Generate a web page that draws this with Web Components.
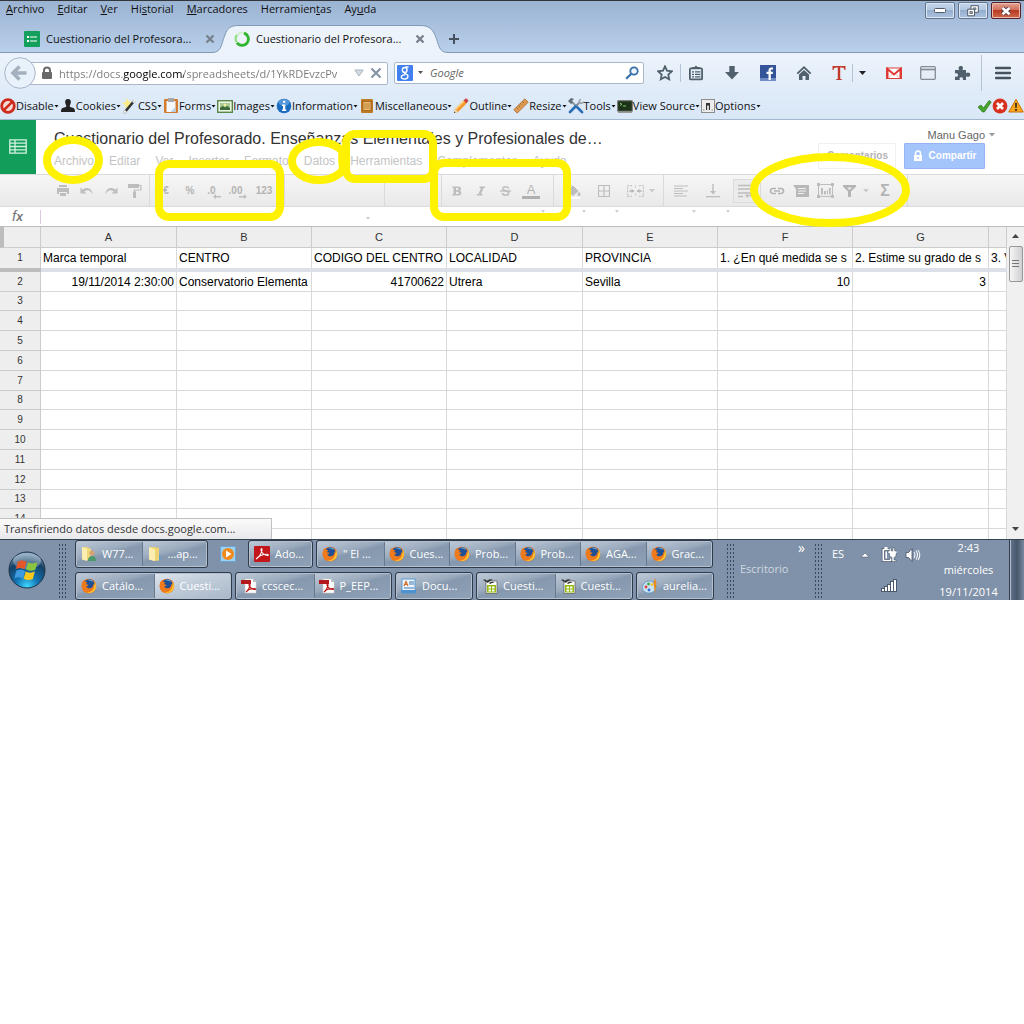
<!DOCTYPE html>
<html lang="es">
<head>
<meta charset="utf-8">
<title>Cuestionario del Profesorado</title>
<style>
  body { margin: 0; background: #fff; font: 12px/16px "Open Sans", "Noto Sans", sans-serif; color: #111; }
</style>
</head>
<body>
<browser-window>
  <menu-bar slot="chrome"></menu-bar>
  <tab-strip slot="chrome"></tab-strip>
  <nav-bar slot="chrome"></nav-bar>
  <dev-toolbar slot="chrome"></dev-toolbar>
  <sheets-app></sheets-app>
</browser-window>
<task-bar></task-bar>

<script>
const RESET = `
  :host, *, *::before { box-sizing: border-box; }
  button { font: inherit; color: inherit; background: none; border: 0; padding: 0; margin: 0; display: inline-flex; align-items: center; white-space: nowrap; }
  input { font: inherit; color: inherit; background: none; border: 0; padding: 0; margin: 0; min-width: 0; outline: 0; }
  ui-icon { flex: none; }
`;
function define(name, css, html) {
  customElements.define(name, class extends HTMLElement {
    constructor() {
      super();
      const t = document.createElement('template');
      const body = typeof html === 'function' ? html(this) : html;
      t.innerHTML = `<style>${RESET}${css}</style>${body}`;
      this.attachShadow({ mode: 'open' }).append(t.content.cloneNode(true));
    }
  });
}

/* ---------- icons: [width, height, markup] ---------- */
const FOX = `<circle cx="8" cy="8" r="7.3" fill="#e8701a"/><circle cx="8.2" cy="6.6" r="5.3" fill="#1f4f94"/><path d="M6 2.2c2-1.4 5-.8 6.300 1.300-1-.3-1.500.2-2.600-.4-1.200-.5-2-.8-3.700-.9z" fill="#57a6dc"/><path d="M.9 5.500C1.200 4 2 2.800 3 2c-.1 1 .2 1.500.6 1.900 1-.2 2 .1 2.700.6-.7.500-1.200.9-1 1.800.8.400 1.700.2 2.300.7-.5 1-1.500 1-2.300 1.400.5 1.600 2.700 2.300 4.700 1.500 1.700-.8 2.500-2.300 2.200-4.200 1.200 1 1.500 2 1.400 3.600.8-1 1.100-2.300 1-3.500.9 2.800.3 5.700-1.900 7.600-3 2.600-7.600 2.500-10.200-.4C.7 11 .3 8.100.9 5.500z" fill="#ee7a1c"/><path d="M13.700 3.800c2 3.400 1.600 7.100-.7 9.300-2 2-5.500 2.500-8 1.200 3.200.5 6.200-.8 7.500-3.500.9-2 1.200-4.700 1.200-7z" fill="#fcc834"/>`;
const PDF = `<path d="M4 1h8l3 3v11H4z" fill="#fff" stroke="#ccc" stroke-width=".6"/><path d="M12 1v3h3z" fill="#bbb"/><path d="M0 2h10v4H0z" fill="#b3181c"/><path d="M5 14c2-1 4-5 4-7 0-1-1-1-1 0 0 2 3 4.500 6 4.500 1 0 .8-1-.5-1C11 10.500 7 12 5 14z" fill="none" stroke="#c01818" stroke-width="1.200"/>`;
const CALC = `<path d="M4 3h11v12.500H4z" fill="#fff" stroke="#555" stroke-width=".7"/><path d="M5 7h9v7.500H5z" fill="#94ba10"/><path d="M6.500 8.500h2.500v2H6.500zM10 8.500h2.500v2H10zM6.500 11.500h2.500v2H6.500zM10 11.500h2.500v2H10z" fill="#fff"/><path d="M1 2c2-1 3 0 4 1 2-2 4-2 6-1-2 0-4 1-5 3C4 4 3 3 1 2zM7 5c2-1.500 4-1.500 6-.5-2 0-3 .5-5 1.500z" fill="#333"/>`;
const G = '#bdbdbd';
const S = '#50606c';
const ICONS = {
  form: [16,16,`<rect width="16" height="16" rx="1" fill="#13a05c"/><path d="M3 5h2v2H3zM3 9h2v2H3z" fill="#fff"/><path d="M6 5.500h7v1H6zM6 9.500h7v1H6z" fill="#fff"/>`],
  spin: [16,16,`<circle cx="8" cy="8" r="6.300" fill="none" stroke="#d5f0cf" stroke-width="2.500"/><path d="M10 2.100A6.300 6.300 0 1 1 3 11.800" fill="none" stroke="#2fb52f" stroke-width="2.800"/><path d="M2.500 11A6.300 6.300 0 0 1 3 4" fill="none" stroke="#8ddc84" stroke-width="2"/>`],
  close: [10,10,`<path d="M1.500 1.500l7 7m0-7l-7 7" stroke="#78828e" stroke-width="2.400"/>`],
  plus: [12,12,`<path d="M6 1v10M1 6h10" stroke="#46515e" stroke-width="2"/>`],
  back: [32,32,`<circle cx="16" cy="16" r="15.300" fill="#e9f1fa" stroke="#a5b6c9"/><path d="M9 16h13.500M15.500 9.500L9 16l6.500 6.500" fill="none" stroke="#a4b0be" stroke-width="3.600"/>`],
  lock: [12,14,`<path d="M3 7V4.500a3 3 0 0 1 6 0V7" fill="none" stroke="#6a6a6a" stroke-width="2"/><rect x="1" y="6" width="10" height="7" rx="1" fill="#6a6a6a"/>`],
  dropm: [10,8,`<path d="M.8 1h8.400L5 7z" fill="#d5dbe2" stroke="#a9b4c0"/>`],
  stop: [12,12,`<path d="M1.500 1.500l9 9m0-9l-9 9" stroke="#8594a4" stroke-width="2.200"/>`],
  google: [16,16,`<rect width="16" height="16" rx="1" fill="#4280ef"/><g fill="none" stroke="#fff" stroke-width="1.400"><ellipse cx="7.700" cy="5" rx="2.300" ry="2.500"/><path d="M8.500 2h3M8 7.500c-1.500 1 1.500 1.500 2.500 2.500 1.500 2-.5 4-2.800 4-2.500 0-4-1.300-3.200-2.900.6-1 2-1.300 3.500-1.300"/></g>`],
  caret: [7,4,`<path d="M1 0h5L3.500 3z" fill="#555"/>`],
  tinycaret: [5,3,`<path d="M.5 0h4L2.500 2.500z" fill="#111"/>`],
  lens: [14,14,`<circle cx="9" cy="5" r="3.700" fill="#eef6fd" stroke="#356fa8" stroke-width="1.800"/><path d="M6.300 7.700L1.200 12.800" stroke="#356fa8" stroke-width="2.200"/>`],
  star: [16,16,`<path d="M8 1.300l2 4.400 4.800.6-3.500 3.300.9 4.700L8 12l-4.200 2.300.9-4.700L1.200 6.300l4.800-.6z" fill="none" stroke="${S}" stroke-width="1.800"/>`],
  clip: [16,16,`<rect x="1.900" y="3.400" width="12.200" height="11" rx="1" fill="none" stroke="${S}" stroke-width="1.800"/><path d="M4 4V2h2.500L8 .5 9.500 2H12v2zM4 6.200h2v1.300H4zM7 6.200h5.500v1.300H7zM4 8.700h2V10H4zM7 8.700h5.500V10H7zM4 11.200h2v1.300H4zM7 11.200h5.500v1.300H7z" fill="${S}"/>`],
  down: [16,16,`<path d="M5.300 1h5.400v6H15l-7 7.500L1 7h4.300z" fill="${S}"/>`],
  fb: [16,16,`<rect width="16" height="16" fill="#34549a"/><path d="M0 13h16v3H0z" fill="#6f8cc4"/><path d="M8.500 15V9H6.500V6.800h2V5.200C8.500 3.300 9.700 2.500 11.200 2.500H13V4.600h-1.200c-.8 0-1 .4-1 1v1.200H13L12.700 9h-1.900v6z" fill="#fff"/>`],
  home: [16,16,`<path d="M8 1L.7 8l1.200 1.200L8 3.500l6.100 5.700L15.300 8z" fill="${S}"/><path d="M3 9.600L8 5l5 4.600V15H9.500v-4h-3v4H3z" fill="${S}"/>`],
  bigT: [14,16,`<path d="M.5 1h13v4h-1c-.3-2-1-2.600-3-2.600H8.200V13c0 1 .3 1.300 2 1.400v.6H3.800v-.6c1.700-.1 2-.4 2-1.400V2.400H4.500c-2 0-2.700.6-3 2.600h-1z" fill="#c1392b"/>`],
  darkcaret: [7,4,`<path d="M0 0h7L3.500 4z" fill="#222"/>`],
  gmail: [16,16,`<rect x=".5" y="3" width="15" height="10.500" fill="#fff" stroke="#d9403a"/><path d="M1.500 13.500V4L8 9.500 14.500 4v9.500" fill="none" stroke="#dd3a35" stroke-width="2"/><path d="M2.500 13l4-4m3 0l4 4" stroke="#e9a5a1" stroke-width=".8"/>`],
  win: [16,16,`<rect x=".7" y="1.700" width="14.600" height="12.600" rx="1" fill="#e4ecf5" stroke="#868b91" stroke-width="1.300"/><path d="M1 4.500h14" stroke="#868b91" stroke-width="1.600"/>`],
  puzzle: [17,16,`<path d="M1 5h4.200c-1.300-1.800-.4-4 1.600-4s2.900 2.200 1.600 4H12v3.200c1.900-1.300 4.300-.4 4.300 1.500S13.900 12.500 12 11.200V15H8.700c.8-1.800 0-2.800-1.400-2.800S5 13.200 5.800 15H1v-3.500c2 .8 3-.2 3-1.500s-1-2.200-3-1.500z" fill="${S}"/>`],
  burger: [16,14,`<path d="M1 2h14M1 7h14M1 12h14" stroke="#46525e" stroke-width="2.400" stroke-linecap="round"/>`],
  disable: [16,16,`<circle cx="8" cy="8" r="6.300" fill="#f4dcd6" stroke="#cf2a1c" stroke-width="2.800"/><path d="M3.800 12.200l8.400-8.400" stroke="#cf2a1c" stroke-width="2.600"/>`],
  cookies: [16,16,`<path d="M8 1c2.300 0 3 1.500 2.800 3.500C10.500 6.500 9.800 7 9.700 8c.1 1 .6 1 2.300 1.500 2.200.6 3 1.500 3 4.500H1c0-3 .8-3.900 3-4.500C5.700 9 6.200 9 6.300 8c-.1-1-.8-1.500-1.100-3.500C5 2.500 5.700 1 8 1z" fill="#222"/>`],
  css: [16,16,`<path d="M5 0l1.300 3.500L9 2.500 8 5.500l3 1.500-3.200 1L8 11 5.500 9 2 10l1.500-3L0 5l3.500-.7z" fill="#f9ec82"/><path d="M2 15L12.500 2.500" stroke="#333" stroke-width="2.600"/><path d="M11 4.500L13.500 1.500M2 15l1.800-2.200" stroke="#eee" stroke-width="2.400"/>`],
  forms: [16,16,`<rect x="1" y="1" width="14" height="14" rx="1" fill="#d27c30"/><path d="M3.500 3h9v11h-9z" fill="#f5f8fb"/><path d="M5 0h6v4H5z" fill="#a7a7a7"/><path d="M12.500 9v5h-5z" fill="#b8d0e8"/>`],
  images: [16,16,`<rect x=".7" y="2.700" width="14.600" height="11.600" fill="#eef5e6" stroke="#57884a" stroke-width="1.400"/><rect x="3" y="5" width="10" height="7" fill="#a9c992"/><path d="M3 12V9.500l3-1.500 2 1.500L10 8l3 2v2z" fill="#3d6a3a"/><circle cx="8" cy="7" r="1.300" fill="#f8f0a0"/>`],
  info: [16,16,`<circle cx="8" cy="8" r="7.300" fill="#1c6cc0"/><ellipse cx="8" cy="4.600" rx="5.300" ry="3.400" fill="#6caae3" opacity=".7"/><path d="M7 2.800h2.300v2H7zM6 6.500h3.300v5h1V13H6v-1.500h1V8H6z" fill="#fff"/>`],
  misc: [16,16,`<rect x="2" y="1" width="12" height="14" rx="1" fill="#c07a25"/><rect x="4" y="3.500" width="8" height="9" fill="#eebc6c" stroke="#8f5716" stroke-width=".7"/><path d="M5 6h6M5 8h6M5 10h6" stroke="#a87535" stroke-width=".8"/>`],
  outline: [16,16,`<path d="M1 15l1-4L11 2l3 3-9 9z" fill="#f59a2a"/><path d="M2 11L11 2l1 1-9 9z" fill="#fbd58a"/><path d="M10.500 2.500L12.500.5c1-.6 3.200 1.500 2.800 2.700l-2 2z" fill="#cc4540"/><path d="M1 15l1-4 3 3z" fill="#e8d5b5"/><path d="M1 15l.4-1.500 1.100 1.100z" fill="#222"/>`],
  resize: [16,16,`<path d="M.8 11.800L11.800.8l3.400 3.400-11 11z" fill="#db9a52" stroke="#a9692d" stroke-width=".8"/><path d="M3.500 9.500l1.200 1.200M5.500 7.500L7 9M7.500 5.500l1.200 1.200M9.500 3.500L11 5" stroke="#8a5422" stroke-width=".7"/>`],
  tools: [16,16,`<path d="M3 3l10.500 10.500" stroke="#8b96a0" stroke-width="2"/><path d="M0 3l3-3 3 1-1 1-1.500 1L5 4.500 3 6z" fill="#666e76"/><path d="M11 5L8 8" stroke="#808a93" stroke-width="2"/><path d="M11 5.500C9.500 3 11 .8 13.300.8l-1.300 2.400 1.700 1.300 2-1.600C16 5.500 14 7 11 5.500z" fill="#9aa4ac"/><path d="M7.500 8.500L2 14M9.500 9.500l4.500 4.700" stroke="#2a6fb5" stroke-width="2.600" stroke-linecap="round"/>`],
  term: [16,16,`<rect x=".6" y="2.600" width="14.800" height="10.800" rx="1" fill="#1d3219" stroke="#7d807d" stroke-width="1.200"/><path d="M3 5l2 1.300L3 7.600M6 8h3" fill="none" stroke="#7fd069"/><path d="M1 13.500h14v1.500H1z" fill="#999"/>`],
  options: [14,16,`<rect x=".5" y="1.500" width="13" height="13" fill="#ececec" stroke="#8d8d8d"/><path d="M5 5h4v7H5z" fill="#333"/><path d="M6.200 7.500h1.600V12H6.200z" fill="#fff"/><circle cx="2.800" cy="12" r=".7" fill="#888"/><circle cx="11.200" cy="12" r=".7" fill="#888"/>`],
  check: [15,16,`<path d="M1 9l3-2 2.500 3L12 2.500 14.300 4 7.300 14H5.500z" fill="#48a52b" stroke="#2a7417" stroke-width=".7"/>`],
  error: [16,16,`<circle cx="8" cy="8" r="7.400" fill="#d8301f"/><path d="M5 5l6 6m0-6l-6 6" stroke="#fff" stroke-width="2.700"/>`],
  warn: [16,16,`<path d="M8 1.300L15.300 14H.7z" fill="#f9a51b" stroke="#c9730b" stroke-linejoin="round"/><path d="M7.100 5h1.800l-.3 5H7.400zM7.100 11h1.800v1.700H7.100z" fill="#222"/>`],
  min: [12,6,`<rect x=".5" y=".5" width="11" height="4" rx="1" fill="#fff" stroke="#535b68"/>`],
  restore: [12,12,`<path d="M4 .7h7.300v6.600H4z" fill="#fff" stroke="#535b68"/><path d="M6.300 2.800h2.700v2H6.300z" fill="#8aa" stroke="#535b68" stroke-width=".6"/><path d="M.7 4.200h6.800v6.600H.7z" fill="#fff" stroke="#535b68"/><path d="M2.900 6.500h2.500v2H2.900z" fill="#9bb" stroke="#535b68" stroke-width=".8"/>`],
  xwin: [12,10,`<path d="M2.500 2l7 6.200m0-6.200l-7 6.200" stroke="#5a4048" stroke-width="4.400"/><path d="M2.500 2l7 6.200m0-6.200l-7 6.200" stroke="#fff" stroke-width="2.600"/>`],
  sheet: [18,16,`<path d="M.8.800h16.400v13.400H.8zM.8 4.200h16.400M.8 7.500h16.400M.8 10.900h16.400M6 .8v13.400" fill="none" stroke="#d5f1e2" stroke-width="1.300"/>`],
  print: [14,12,`<path d="M3 0h8v2H3zM1 3h12v6h-2V7H3v2H1zM4 8h6v3H4z" fill="${G}"/>`],
  undo: [14,10,`<path d="M.5 1.500v6h6L4.300 5.500C7 3.500 10 4 12.500 8c.6-.3-1-5.500-5-6C5.500 1.700 4 2.500 2.800 3.800z" fill="${G}"/>`],
  redo: [14,10,`<path d="M13.500 1.500v6h-6l2.200-2C7 3.500 4 4 1.500 8c-.6-.3 1-5.500 5-6 2-.3 3.500.5 4.700 1.800z" fill="${G}"/>`],
  paint: [14,16,`<path d="M0 1h11v4H0z" fill="${G}"/><path d="M11 2.500h2v4.500H6.500V9" fill="none" stroke="${G}" stroke-width="1.200"/><path d="M5 8.500h3V15H5z" fill="${G}"/>`],
  arrl: [8,5,`<path d="M8 2H3V0L0 2.700 3 5V3.400h5z" fill="${G}"/>`],
  arrr: [8,5,`<path d="M0 2h5V0l3 2.700L5 5V3.400H0z" fill="${G}"/>`],
  fill: [16,16,`<path d="M3 8l5-5 5 5-5 4.500zM5 1l3 3" fill="${G}" stroke="${G}"/><path d="M14 8.500c1 1.500 1.500 2 1.500 3a1.500 1.500 0 0 1-3 0c0-1 .5-1.500 1.500-3z" fill="${G}"/><path d="M1 14h14v2H1z" fill="#fafafa"/>`],
  borders: [12,12,`<path d="M.5.500h11v11H.5zM6 .5v11M.5 6h11" fill="none" stroke="${G}" stroke-width="1.200"/>`],
  merge: [17,12,`<path d="M5 .6H.6v10.800H5M12 .6h4.400v10.800H12M8.500.6v3m0 5v3" fill="none" stroke="#c6c6c6" stroke-width="1.200" stroke-dasharray="2 1"/><path d="M2.500 6h2M12.500 6h2" stroke="#b0b0b0" stroke-width="1.400"/><path d="M4.500 4L7.500 6 4.500 8zM12.500 4l-3 2 3 2z" fill="#b0b0b0"/>`],
  gcaret: [6,4,`<path d="M0 0h6L3 3.500z" fill="#cacaca"/>`],
  bold: [10,10,`<path d="M.5.500h5.300c2 0 3.200.8 3.200 2.200 0 1-.6 1.700-1.500 2C8.700 5 9.400 5.900 9.400 7 9.400 8.600 8 9.500 6 9.500H.5V8h1V2h-1zM4 2v2h1.500c.6 0 1-.4 1-1s-.4-1-1-1zM4 5.700V8h1.700c.7 0 1.100-.5 1.100-1.200 0-.7-.5-1.100-1.200-1.100z" fill="${G}"/>`],
  italic: [10,10,`<path d="M3.500.500H9V2H7.500L5 8h1.500v1.500H.8V8h1.700L5 2H3.500z" fill="${G}"/>`],
  strike: [11,10,`<path d="M8.500 2.700C8.300 1.500 7.200.800 5.500.800 3.800.8 2.700 1.600 2.700 2.800c0 2.500 6 1.500 6 4.200 0 1.300-1.200 2.200-3.100 2.200-1.900 0-3.200-.9-3.300-2.300" fill="none" stroke="${G}" stroke-width="1.600"/><path d="M0 5h11" stroke="${G}" stroke-width="1.300"/>`],
  align: [14,12,`<path d="M0 1h14M0 3.500h9M0 6h14M0 8.500h9M0 11h13" stroke="${G}" stroke-width="1.100"/>`],
  valign: [14,14,`<path d="M6.300 0h1.400v7H10l-3 3.500L4 7h2.300zM0 12h14v1.300H0z" fill="${G}"/>`],
  wrap: [14,14,`<path d="M0 1.500h14M0 5h14M0 9h12.500v3M0 12.500h5" fill="none" stroke="${G}" stroke-width="1.300"/><path d="M10 9.500v4.500l-3-2.300z" fill="${G}"/><path d="M9 11.800h4" stroke="${G}" stroke-width="1.200"/>`],
  link: [16,8,`<path d="M7 6.500H4a2.500 2.500 0 0 1 0-5h3M9 1.500h3a2.500 2.500 0 0 1 0 5H9M5 4h6" fill="none" stroke="#b4b4b4" stroke-width="1.700"/>`],
  comment: [16,14,`<path d="M0 1h16v12H3V5z" fill="#b8b8b8"/><path d="M5 4.500h8M5 7h8M5 9.500h6" stroke="#f1f1f1"/>`],
  chart: [17,15,`<path d="M1.500 1.500h14v12h-14z" fill="none" stroke="${G}"/><path d="M0 0h3v3H0zM14 0h3v3h-3zM0 12h3v3H0zM14 12h3v3h-3zM4 5h2v6.500H4zM7 8h2v3.500H7zM10 7h1v4.500h-1zM12 5h1.800v6.500H12z" fill="${G}"/>`],
  filter: [13,12,`<path d="M0 0h13v1.500L8 6.500V12H5V6.500L0 1.500z" fill="#b4b4b4"/><path d="M4 2.500h5L6.500 5z" fill="#eee"/>`],
  whitelock: [10,12,`<path d="M2.500 5V3.500a2.500 2.500 0 0 1 5 0V5" fill="none" stroke="#fff" stroke-width="1.500"/><path d="M1 5h8v6H1z" fill="#fff"/><path d="M4.300 7h1.400v2H4.300z" fill="#a4c4fb"/>`],
  ucaret: [6,4,`<path d="M0 0h6L3 3.500z" fill="#999"/>`],
  scup: [7,5,`<path d="M0 4h7L3.500 0z" fill="#444"/>`],
  scdown: [7,5,`<path d="M0 0h7L3.500 4z" fill="#444"/>`],
  orb: [38,38,`<defs><radialGradient id="o" cx=".5" cy=".95" r=".9"><stop offset="0" stop-color="#3fd8ff"/><stop offset=".35" stop-color="#1273b4"/><stop offset=".75" stop-color="#144064"/><stop offset="1" stop-color="#6f95b3"/></radialGradient></defs><circle cx="19" cy="19" r="18" fill="url(#o)" stroke="#1f3346" stroke-width="1"/><ellipse cx="19" cy="10" rx="14" ry="8" fill="#fff" opacity=".3"/><path d="M10 10.500c3-1.500 5.500-1.500 8.500.2l-2 7.600c-3-1.700-5.500-1.500-8.700-.2z" fill="#e2582a"/><path d="M20 11.300c3.500 1.700 6 1.400 9.500 0l-2.200 7.500c-3 1.400-5.700 1.500-9.200-.2z" fill="#8bc53f"/><path d="M7.300 19.800c3-1.500 5.800-1.400 8.700.2l-2 7.400c-3-1.600-5.500-1.500-8.600-.2z" transform="translate(1 0)" fill="#3f9be0"/><path d="M17.700 20.400c3.300 1.700 6 1.500 9.200.2l-2.100 7.400c-3 1.400-5.900 1.400-9.200-.3z" fill="#fbc81c"/>`],
  fox: [16,16,FOX], pdf: [16,16,PDF], calc: [16,16,CALC],
  folderu: [16,16,`<path d="M1 1h5l4 2v12l-5-1-4-1z" fill="#f0d878"/><path d="M6 3v12l-5-1.500V1z" fill="#fbeeb0"/><circle cx="11" cy="7" r="2.600" fill="#d6a273"/><path d="M7 15c0-4 2-5 4-5s4 1 4 5z" fill="#4c9a6b"/>`],
  folder: [16,16,`<path d="M3 1h4l5 1v12.500l-5 .5-5-1.500z" fill="#edd371"/><path d="M8 3.500v11.500l-6-1.500V1z" fill="#fbeeb0"/><path d="M12 9h1.500v5H12z" fill="#5aa3da"/>`],
  player: [16,16,`<rect x=".5" y=".5" width="15" height="15" fill="#9fd0ef" stroke="#6aa6d4"/><circle cx="8" cy="8" r="6" fill="#f08a1c"/><path d="M6 4.500L11.500 8 6 11.500z" fill="#fff"/>`],
  adobe: [16,16,`<rect width="16" height="16" rx="1" fill="#c2161b"/><path d="M2 13c3-1.500 6-6 6-9.500 0-1.300-1.300-1-1 .5.500 3 3.500 5.500 6.500 5.500 1.300 0 1-1.200-.5-1.200C9.500 8.300 5 9.500 2 13z" fill="none" stroke="#fff" stroke-width="1.100"/>`],
  wordpad: [16,16,`<rect x="1" y="1" width="13" height="14" fill="#eef6fd" stroke="#5c9ad0"/><path d="M0 12h15v3H0z" fill="#4b92d0"/><path d="M3 8l2-4.500L7 8M4 6.500h2" fill="none" stroke="#d8691c" stroke-width="1.200"/><path d="M8 4h5M8 6h5M3 10h10" stroke="#3a77b0"/>`],
  paintapp: [16,16,`<path d="M7.500 3C11 3 14 5.500 14 9s-3 6-7 6-6.500-2.500-6.500-5.500S3 3 7.500 3z" fill="#c7e2f4" stroke="#5d93bb" stroke-width=".8"/><circle cx="4" cy="9" r="1.400" fill="#df3f34"/><circle cx="6.500" cy="6" r="1.400" fill="#4aa53c"/><circle cx="10" cy="6.500" r="1.300" fill="#f3c51f"/><circle cx="7" cy="12" r="1.400" fill="#3a6fd0"/><path d="M13 0l1.500 5-1.500 11-1.500-11z" fill="#e88a1c"/>`],
  trayup: [10,6,`<path d="M1 5h8L5 1z" fill="#fff" stroke="#55657a" stroke-width=".6"/>`],
  power: [16,16,`<path d="M8 2.500H2.300v11h7.400v-2" fill="none" stroke="#3f4d5f" stroke-width="3"/><path d="M8 2.500H2.300v11h7.400v-2" fill="none" stroke="#fff" stroke-width="1.700"/><path d="M3.500 0h3v2h-3zM4.500 4.500H6v7H4.500z" fill="#fff"/><path d="M8.300 1h1.900v3h1.600V1h1.900v3H16v2.500h-1V9l-2 1.500V13h2v1.500h-4v-4L8.500 9V6.500H7V4h1.300z" fill="#fff" stroke="#3f4d5f" stroke-width=".5"/>`],
  sound: [16,16,`<path d="M1 5.500h2.500L7 1.500v13L3.500 10.500H1z" fill="#fff" stroke="#3f4d5f" stroke-width=".8"/><path d="M9 5c1.300 2 1.300 4 0 6M11 3.500c2 3 2 6 0 9M13 3c2.500 3.500 2.500 6.500 0 10" fill="none" stroke="#f2f5f9" stroke-width="1.100"/>`],
  signal: [16,13,`<path d="M0 9h3v4H0zM3 7h3v6H3zM6 5h3v8H6zM9 2h4v11H9zM12 0h4v13h-4z" fill="#4a586b"/><path d="M1 10h2v2H1zM4 8h2v4H4zM7 6h2v6H7zM10 3h2v9h-2zM13 1h2v11h-2z" fill="#fff"/>`],
};
customElements.define('ui-icon', class extends HTMLElement {
  constructor() {
    super();
    const [w, h, body] = ICONS[this.getAttribute('name')];
    this.attachShadow({ mode: 'open' }).innerHTML =
      `<style>:host{display:inline-flex;width:${w}px;height:${h}px}svg{display:block}</style><svg width="${w}" height="${h}" viewBox="0 0 ${w} ${h}" aria-hidden="true">${body}</svg>`;
  }
});

/* ---------- browser chrome ---------- */
define('menu-bar', `
  :host { display: flex; justify-content: space-between; align-items: flex-start; height: 24px; border-top: 1px solid #33363c; font-size: 11px; }
  nav { display: flex; gap: 13px; padding-left: 6px; }
  nav button { height: 16px; }
  .win { display: flex; gap: 3px; padding: 1px 3px 0 0; }
  .win button { width: 30px; height: 17px; justify-content: center; border: 1px solid #63758d; border-radius: 2px; background: linear-gradient(#c3d5ea, #b2c8e1 45%, #94aecd 50%, #adc4e0); box-shadow: inset 0 0 0 1px #dbe7f5; }
  .win .x { border-color: #55202c; background: linear-gradient(#e3a294, #d2705c 45%, #b83a22 50%, #cf6a4c); box-shadow: inset 0 0 0 1px #eebbaf; }
`, `<nav>
  <button><span><u>A</u>rchivo</span></button><button><span><u>E</u>ditar</span></button><button><span><u>V</u>er</span></button>
  <button><span>Hi<u>s</u>torial</span></button><button><span><u>M</u>arcadores</span></button><button><span>Herramien<u>t</u>as</span></button><button><span>Ay<u>u</u>da</span></button>
</nav>
<div class="win"><button aria-label="Minimizar"><ui-icon name="min"></ui-icon></button><button aria-label="Restaurar"><ui-icon name="restore"></ui-icon></button><button class="x" aria-label="Cerrar"><ui-icon name="xwin"></ui-icon></button></div>`);

define('browser-tab', `
  :host { display: grid; width: 212px; height: 29px; font-size: 11px; }
  :host([active]) { width: 236px; }
  svg, .row { grid-area: 1 / 1; }
  svg { display: none; width: 100%; height: 29px; }
  :host([active]) svg { display: block; }
  .row { display: flex; align-items: center; gap: 6px; padding: 1px 0 0 24px; }
  :host([active]) .row { padding-left: 22px; }
  .title { width: 153px; white-space: nowrap; overflow: hidden; }
`, `<svg viewBox="0 0 236 29" preserveAspectRatio="none"><path d="M0 28.500C10 28.500 9 20 13 11 15 5 18 1.500 26 1.500H208C217 1.500 220 5 223 11 227 20 226 28.500 236 28.500V29H0z" fill="#edf3fb"/><path d="M0 28.500C10 28.500 9 20 13 11 15 5 18 1.500 26 1.500H208C217 1.500 220 5 223 11 227 20 226 28.500 236 28.500" fill="none" stroke="#8299b8"/></svg>
<div class="row"><slot name="icon"></slot><span class="title"><slot></slot></span><button aria-label="Cerrar pestaña"><ui-icon name="close"></ui-icon></button></div>`);

define('tab-strip', `
  :host { display: flex; align-items: center; height: 29px; box-shadow: inset 0 -1px #8299b8; }
`, `<browser-tab><ui-icon slot="icon" name="form"></ui-icon>Cuestionario del Profesora...</browser-tab><browser-tab active><ui-icon slot="icon" name="spin"></ui-icon>Cuestionario del Profesora...</browser-tab><button aria-label="Nueva pestaña"><ui-icon name="plus"></ui-icon></button>`);

define('nav-bar', `
  :host { display: flex; align-items: center; height: 40px; padding: 0 13px 0 4px; background: linear-gradient(#edf3fb, #dfebf8); font-size: 12px; }
  .back { z-index: 1; }
  .url, .search { display: flex; align-items: center; height: 23px; background: #fff; border: 1px solid #a9b9cb; border-radius: 2px; }
  .url { flex: 1; margin-left: -10px; padding: 0 5px 0 14px; gap: 6px; }
  .url input { flex: 1; height: 20px; font-size: 11px; -webkit-text-fill-color: transparent; background: linear-gradient(90deg, #777 64px, #000 64px, #000 125px, #777 125px) text; }
  .search { width: 250px; height: 22px; margin-left: 6px; padding: 0 4px 0 2px; gap: 4px; }
  .search input { flex: 1; font-style: italic; font-size: 11px; color: #666; padding-left: 2px; }
  .search input::placeholder { color: #666; opacity: 1; }
  .tools { display: flex; align-items: center; gap: 20px; padding-left: 13px; }
  .tools div { display: flex; align-items: center; gap: 7px; }
  .tools .txt { gap: 6px; }
  .tools .ext { gap: 18px; }
  .tools .end { gap: 13px; margin-left: -10px; }
  i { width: 1px; height: 18px; background: #b5c4d5; }
  .tall { height: 36px; }
`, `<button class="back" aria-label="Atrás"><ui-icon name="back"></ui-icon></button>
<div class="url"><ui-icon name="lock"></ui-icon><input aria-label="Dirección" value="https://docs.google.com/spreadsheets/d/1YkRDEvzcPv"><ui-icon name="dropm"></ui-icon><button aria-label="Detener"><ui-icon name="stop"></ui-icon></button></div>
<div class="search"><ui-icon name="google"></ui-icon><ui-icon name="caret"></ui-icon><input aria-label="Buscar" placeholder="Google"><ui-icon name="lens"></ui-icon></div>
<div class="tools"><div><button aria-label="Marcar"><ui-icon name="star"></ui-icon></button><i></i><button aria-label="Marcadores"><ui-icon name="clip"></ui-icon></button></div>
<button aria-label="Descargas"><ui-icon name="down"></ui-icon></button><button aria-label="Facebook"><ui-icon name="fb"></ui-icon></button><button aria-label="Inicio"><ui-icon name="home"></ui-icon></button>
<div class="txt"><button aria-label="Texto"><ui-icon name="bigT"></ui-icon></button><i></i><button aria-label="Más"><ui-icon name="darkcaret"></ui-icon></button></div>
<div class="ext"><button aria-label="Gmail"><ui-icon name="gmail"></ui-icon></button><button aria-label="Ventana"><ui-icon name="win"></ui-icon></button><button aria-label="Complementos"><ui-icon name="puzzle"></ui-icon></button></div>
<div class="end"><i class="tall"></i><button aria-label="Menú"><ui-icon name="burger"></ui-icon></button></div></div>`);

const DEV = [['disable','Disable'],['cookies','Cookies'],['css','CSS'],['forms','Forms'],['images','Images'],['info','Information'],['misc','Miscellaneous'],['outline','Outline'],['resize','Resize'],['tools','Tools'],['term','View Source'],['options','Options']];
define('dev-toolbar', `
  :host { display: flex; justify-content: space-between; align-items: center; height: 27px; background: linear-gradient(#dfebf8, #d9e7f7); border-bottom: 1px solid #a3b7ce; font-size: 11px; overflow: hidden; }
  div { display: flex; align-items: center; }
  .items button { margin-right: 1px; }
`, `<div class="items">${DEV.map(([i, t]) => `<button><ui-icon name="${i}"></ui-icon><span>${t}</span><ui-icon name="tinycaret"></ui-icon></button>`).join('')}</div>
<div><ui-icon name="check"></ui-icon><ui-icon name="error"></ui-icon><ui-icon name="warn"></ui-icon></div>`);

define('browser-window', `
  :host { display: block; }
  header { background: linear-gradient(#9ab3d1, #b9d0eb 52px); }
`, `<header><slot name="chrome"></slot></header><main><slot></slot></main>`);

/* ---------- spreadsheet ---------- */
define('sheet-header', `
  :host { display: flex; height: 54px; background: #fff; font-family: "Liberation Sans", Arial, sans-serif; }
  .logo { display: flex; align-items: center; justify-content: center; width: 36px; background: #129e5a; }
  .mid { flex: 1; padding: 8px 0 0 18px; min-width: 0; }
  h1 { margin: 0; font-size: 16px; line-height: 21px; font-weight: normal; color: #333; white-space: nowrap; }
  nav { display: flex; gap: 15px; font-size: 12px; line-height: 16px; color: #c4c4c4; padding-top: 4px; }
  .right { display: flex; flex-direction: column; align-items: flex-end; padding: 7px 39px 0 0; font-size: 11px; }
  .user { gap: 4px; color: #666; margin-right: -10px; }
  .acts { display: flex; gap: 8px; font-weight: bold; font-size: 10px; }
  .acts button { height: 26px; border: 1px solid #f0f0f0; border-radius: 1px; width: 78px; padding-right: 7px; justify-content: flex-end; color: #b5b5b5; }
  .acts .share { width: 81px; justify-content: center; padding: 0; gap: 6px; background: #a4c5fc; border-color: #93b5f4; color: #fff; }
`, `<div class="logo"><ui-icon name="sheet"></ui-icon></div>
<div class="mid"><h1>Cuestionario del Profesorado. Enseñanzas Elementales y Profesionales de…</h1>
<nav>${['Archivo','Editar','Ver','Insertar','Formato','Datos','Herramientas','Complementos','Ayuda'].map(t => `<button>${t}</button>`).join('')}</nav></div>
<div class="right"><button class="user">Manu Gago <ui-icon name="ucaret"></ui-icon></button><div class="acts"><button>Comentarios</button><button class="share"><ui-icon name="whitelock"></ui-icon>Compartir</button></div></div>`);

define('tool-button', `
  :host { display: inline-flex; }
  button { width: 24px; height: 24px; justify-content: center; font: bold 10px/12px "Liberation Sans", Arial, sans-serif; color: #b4b4b4; }
  :host([wide]) button { width: 28px; }
  :host([slim]) button { width: 10px; }
  :host([boxed]) button { border: 1px solid #dcdcdc; background: #ebebeb; }
`, el => `<button aria-label="${el.getAttribute('label') || ''}"><slot></slot></button>`);
define('tool-group', `
  :host { display: flex; align-items: center; height: 100%; border-right: 1px solid #dadada; }
`, `<slot></slot>`);
const ib = (n, l, x = '') => `<tool-button label="${l}" ${x}><ui-icon name="${n}"></ui-icon></tool-button>`;
define('sheet-toolbar', `
  :host { display: flex; height: 33px; background: linear-gradient(#f6f6f6, #e9e9e9); border: 1px solid #dadada; border-width: 1px 0; color: #bababa; }
  .num { display: inline-flex; align-items: flex-end; }
  .num ui-icon { margin: 0 0 -2px -3px; }
  .g1 { padding: 0 2px 0 51px; } .g2 { padding: 0 6px 0 4px; } .g3 { width: 100px; } .g4 { width: 57px; }
  .g5 { padding: 0 8px 0 3px; } .g6 { padding: 0 6px 0 7px; gap: 7px; }
  .g7 { padding: 0 3px 0 5px; gap: 8px; } .g8 { padding: 0 8px 0 4px; }
  .pair { display: flex; align-items: center; }
  .bar { border-bottom: 3px solid #b0b0b0; padding: 0 5px; font-size: 13px; line-height: 13px; font-weight: normal; }
  .sig { font-size: 16px; }
`, `<tool-group class="g1">${ib('print','Imprimir')}${ib('undo','Deshacer')}${ib('redo','Rehacer')}${ib('paint','Copiar formato')}</tool-group>
<tool-group class="g2"><tool-button label="Euro">€</tool-button><tool-button label="Porcentaje">%</tool-button><tool-button label="Menos decimales"><span class="num">.0<ui-icon name="arrl"></ui-icon></span></tool-button><tool-button label="Más decimales"><span class="num">.00<ui-icon name="arrr"></ui-icon></span></tool-button><tool-button wide label="Formatos">123</tool-button></tool-group>
<tool-group class="g3"></tool-group><tool-group class="g4"></tool-group>
<tool-group class="g5">${ib('bold','Negrita')}${ib('italic','Cursiva')}${ib('strike','Tachado')}<tool-button wide label="Color de texto"><span class="bar">A</span></tool-button></tool-group>
<tool-group class="g6">${ib('fill','Relleno')}${ib('borders','Bordes')}<span class="pair">${ib('merge','Combinar')}${ib('gcaret','Opciones','slim')}</span></tool-group>
<tool-group class="g7">${ib('align','Alinear')}${ib('valign','Alinear vertical')}${ib('wrap','Ajustar texto','boxed')}</tool-group>
<tool-group class="g8">${ib('link','Enlace')}${ib('comment','Comentario')}${ib('chart','Gráfico')}${ib('filter','Filtro')}${ib('gcaret','Opciones','slim')}<tool-button wide label="Funciones"><span class="sig">Σ</span></tool-button></tool-group>`);

define('formula-bar', `
  :host { display: flex; align-items: center; height: 20px; background: #fff; border-bottom: 1px solid #bdbdbd; }
  label { width: 40px; padding-left: 12px; font: italic 15px/18px "Liberation Sans", Arial, sans-serif; color: #777; }
  label small { font-size: 12px; font-weight: bold; }
  input { flex: 1; height: 14px; border-left: 1px solid #dcc8dc; }
  svg { display: block; flex: none; }
  .tail { width: 99px; }
`, `<label for="f">f<small>x</small></label><input id="f"><svg width="560" height="19"><g fill="#d0d0d0"><path d="M1 10h4l-2 3z"/><path d="M176 3h4l-2 3zM217 3h4l-2 3zM250 3h4l-2 3zM327 3h4l-2 3zM361 3h4l-2 3z"/></g></svg><span class="tail"></span>`);

const LETTERS = ['A','B','C','D','E','F','G',''];
const R1 = ['Marca temporal','CENTRO','CODIGO DEL CENTRO','LOCALIDAD','PROVINCIA','1. ¿En qué medida se s','2. Estime su grado de s','3. V'];
const R2 = ['19/11/2014 2:30:00','Conservatorio Elementa','41700622','Utrera','Sevilla','10','3',''];
const NUM = [0, 2, 5, 6];
const row = (n, cells) => `<tr><th scope="row">${n}</th>${cells.map((c, i) => `<td${n > 1 && NUM.includes(i) ? ' class="n"' : ''}>${c}</td>`).join('')}</tr>`;
define('sheet-grid', `
  :host { display: flex; height: 312px; overflow: hidden; font: 12px/14px "Liberation Sans", Arial, sans-serif; color: #000; }
  .view { flex: 1; min-width: 0; overflow: hidden; }
  table { width: 100%; table-layout: fixed; border-collapse: separate; border-spacing: 0; }
  col.h { width: 41px; } col.a { width: 136px; } col.c { width: 135px; }
  tr { height: 20px; }
  .data tr:nth-child(5n + 2) { height: 19px; }
  th { font-size: 11px; font-weight: normal; color: #333; background: #eee; border: 1px solid #ccc; border-width: 0 1px 1px 0; padding: 0; }
  td { border: 1px solid #d9d9d9; border-width: 0 1px 1px 0; padding: 0 2px; overflow: hidden; white-space: nowrap; }
  tbody th { font-size: 10px; }
  thead tr { height: 21px; }
  thead th:first-child { border-left: 4px solid #bdbdbd; }
  .first td, .first th { border-bottom: 0; }
  .first .freeze { height: 4px; }
  .freeze td { padding: 0; border: 0; background: #dce0e9; line-height: 0; }
  .freeze td:first-child { background: #bdbdbd; }
  .n { text-align: right; }
  .scroll { display: flex; flex-direction: column; align-items: center; justify-content: space-between; width: 17px; background: #f0f0f0; padding: 7px 0; }
  .top { display: flex; flex-direction: column; align-items: center; gap: 7px; }
  .thumb { width: 14px; height: 36px; border: 1px solid #989898; border-radius: 2px; background: repeating-linear-gradient(#777 0 1px, transparent 1px 3px) center / 7px 9px no-repeat, linear-gradient(90deg, #f5f5f5, #cfcfd2); }
`, `<div class="view"><table><colgroup><col class="h"><col class="a"><col class="c"><col class="c"><col class="a"><col class="c"><col class="c"><col class="a"><col></colgroup>
<thead><tr><th></th>${LETTERS.map(l => `<th scope="col">${l}</th>`).join('')}</tr></thead>
<tbody class="first">${row(1, R1)}<tr class="freeze"><td></td><td colspan="8"></td></tr></tbody>
<tbody class="data">${row(2, R2)}${Array.from({ length: 13 }, (_, i) => row(i + 3, Array(8).fill(''))).join('')}</tbody></table></div>
<div class="scroll"><div class="top"><ui-icon name="scup"></ui-icon><div class="thumb"></div></div><ui-icon name="scdown"></ui-icon></div>`);

define('marker-layer', `
  :host { position: absolute; top: 0; left: 0; pointer-events: none; }
  svg { display: block; }
`, `<svg width="920" height="120" fill="none" stroke="#fff200" stroke-width="8" aria-hidden="true">
<ellipse cx="73" cy="40" rx="26" ry="20"/><rect x="159" y="44" width="121" height="53" rx="10"/><ellipse cx="319" cy="41" rx="27" ry="19"/><path d="M344 28q-2 12 1 26" stroke-width="10"/>
<rect x="346" y="14" width="87" height="45" rx="9"/><rect x="434" y="43" width="133" height="54" rx="10"/><ellipse cx="830" cy="70" rx="76" ry="33"/></svg>`);

define('load-status', `
  :host { position: absolute; left: 0; bottom: 0; width: 272px; height: 21px; padding: 2px 4px; background: linear-gradient(#fafafa, #e9e9ec); border: 1px solid #c0c0c0; border-width: 1px 1px 0 0; color: #333; font-size: 11px; line-height: 16px; white-space: nowrap; }
`, `<slot></slot>`);

define('sheets-app', `:host { display: block; position: relative; }`,
`<sheet-header></sheet-header><sheet-toolbar></sheet-toolbar><formula-bar></formula-bar><sheet-grid></sheet-grid><marker-layer></marker-layer><load-status>Transfiriendo datos desde docs.google.com...</load-status>`);

/* ---------- taskbar ---------- */
define('task-item', `
  :host { display: flex; flex: 1; min-width: 0; }
  :host(:not(:first-child)) button { border-left: 1px solid #66788e; }
  button { flex: 1; min-width: 0; gap: 5px; padding-left: 4px; color: #fff; background: linear-gradient(165deg, #bcc8d6, #9aaabd 40%, #8698ae 50%, #8fa1b6); overflow: hidden; }
  :host([on]) button { background: linear-gradient(165deg, #dde4ed, #c0ccd9 45%, #aab8c9); }
`, el => `<button><ui-icon name="${el.getAttribute('icon')}"></ui-icon><span><slot></slot></span></button>`);
define('task-group', `
  :host { display: flex; height: 28px; border: 1px solid #2e3b4b; border-radius: 3px; box-shadow: inset 0 0 0 1px #b4c0cf; overflow: hidden; padding: 1px; }
`, `<slot></slot>`);
define('task-bar', `
  :host { display: flex; height: 61px; background: #8092a9; border-top: 1px solid #39434f; color: #fff; font-size: 11px; }
  .start { width: 54px; justify-content: center; }
  .grip { flex: none; width: 9px; margin: 3px 4px 2px; background: radial-gradient(circle, #39475a 1px, transparent 1px) 0 0 / 3px 4px; }
  .tasks { flex: 1; display: flex; flex-direction: column; gap: 4px; padding-left: 4px; }
  .r { display: flex; align-items: center; gap: 3px; }
  task-group, .play { flex: none; }
  .w1 { width: 65px; } .w2 { width: 133px; } .w6 { width: 397px; } .v1 { width: 78px; } .v2 { width: 157px; }
  .play { width: 34px; justify-content: center; }
  .desk { width: 71px; display: flex; flex-direction: column; padding-left: 1px; color: #cfd7e1; }
  .desk span:first-child { align-self: flex-end; padding-right: 5px; color: #fff; font-size: 14px; }
  .desk span:last-child { padding-top: 5px; }
  .lang { width: 26px; padding: 6px 0 0 5px; }
  .tray { display: grid; grid-template-columns: repeat(3, 24px); justify-items: center; align-content: start; align-items: center; row-gap: 16px; padding-top: 7px; }
  .tray .sig { grid-column: 2; }
  .clock { width: 84px; text-align: center; line-height: 22px; padding-left: 3px; margin-top: -3px; }
  .show { width: 15px; border-left: 1px solid #333e4c; background: linear-gradient(90deg, #b0bccb 1px, #61738a 1px, #46566b 50%, #7688a0); }
`, `<button class="start" aria-label="Inicio"><ui-icon name="orb"></ui-icon></button><div class="grip"></div>
<div class="tasks"><div class="r"><task-group class="w2"><task-item icon="folderu">W77...</task-item><task-item icon="folder">...ap...</task-item></task-group><button class="play" aria-label="Reproductor"><ui-icon name="player"></ui-icon></button><task-group class="w1"><task-item icon="adobe">Ado...</task-item></task-group>
<task-group class="w6"><task-item icon="fox">" El ...</task-item><task-item icon="fox">Cues...</task-item><task-item icon="fox">Prob...</task-item><task-item icon="fox">Prob...</task-item><task-item icon="fox">AGA...</task-item><task-item icon="fox">Grac...</task-item></task-group></div>
<div class="r"><task-group class="v2"><task-item icon="fox">Catálo...</task-item><task-item on icon="fox">Cuesti...</task-item></task-group><task-group class="v2"><task-item icon="pdf">ccscec...</task-item><task-item icon="pdf">P_EEP...</task-item></task-group><task-group class="v1"><task-item icon="wordpad">Docu...</task-item></task-group><task-group class="v2"><task-item icon="calc">Cuesti...</task-item><task-item icon="calc">Cuesti...</task-item></task-group><task-group class="v1"><task-item icon="paintapp">aurelia...</task-item></task-group></div></div>
<div class="grip"></div><div class="desk"><span>»</span><span>Escritorio</span></div><div class="grip"></div>
<span class="lang">ES</span><div class="tray"><ui-icon name="trayup"></ui-icon><ui-icon name="power"></ui-icon><ui-icon name="sound"></ui-icon><ui-icon class="sig" name="signal"></ui-icon></div>
<div class="clock">2:43<br>miércoles<br>19/11/2014</div><button class="show" aria-label="Mostrar escritorio"></button>`);
</script>
</body>
</html>
